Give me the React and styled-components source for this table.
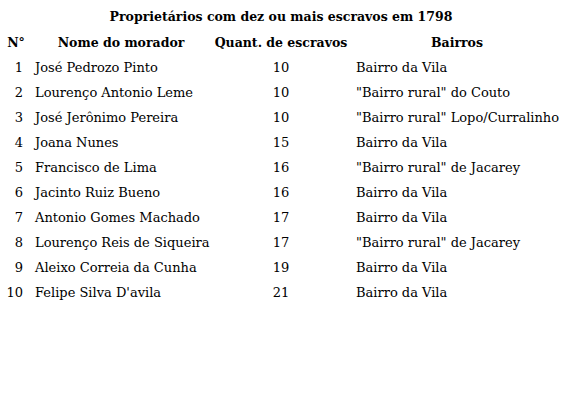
import styled, { createGlobalStyle } from "styled-components";

const GlobalStyle = createGlobalStyle`
  body {
    margin: 0;
    background: #fff;
    color: #000;
    font-family: "DejaVu Serif", "Liberation Serif", serif;
  }
`;

const Table = styled.table`
  width: 562px;
  border-collapse: collapse;
  table-layout: fixed;
  font-size: 13px;
`;

const Caption = styled.caption`
  font-weight: bold;
  font-size: 12.5px;
  line-height: 26px;
  padding-top: 4px;
  text-align: center;
`;

const Th = styled.th`
  font-weight: bold;
  font-size: 12.5px;
  height: 25px;
  padding: 0;
  text-align: center;
`;

const Td = styled.td`
  height: 25px;
  padding: 0 ${({ $right }) => $right || 0}px 0 ${({ $pad }) => $pad || 0}px;
  text-align: ${({ $align }) => $align || "left"};
  white-space: nowrap;
  font-weight: 300;
`;

const rows = [
  ["José Pedrozo Pinto", 10, "Bairro da Vila"],
  ["Lourenço Antonio Leme", 10, '"Bairro rural" do Couto'],
  ["José Jerônimo Pereira", 10, '"Bairro rural" Lopo/Curralinho'],
  ["Joana Nunes", 15, "Bairro da Vila"],
  ["Francisco de Lima", 16, '"Bairro rural" de Jacarey'],
  ["Jacinto Ruiz Bueno", 16, "Bairro da Vila"],
  ["Antonio Gomes Machado", 17, "Bairro da Vila"],
  ["Lourenço Reis de Siqueira", 17, '"Bairro rural" de Jacarey'],
  ["Aleixo Correia da Cunha", 19, "Bairro da Vila"],
  ["Felipe Silva D'avila", 21, "Bairro da Vila"],
];

export default function App() {
  return (
    <>
      <GlobalStyle />
      <Table>
        <Caption>Proprietários com dez ou mais escravos em 1798</Caption>
        <colgroup>
          <col style={{ width: 32 }} />
          <col style={{ width: 178 }} />
          <col style={{ width: 142 }} />
          <col style={{ width: 210 }} />
        </colgroup>
        <thead>
          <tr>
            <Th>N°</Th>
            <Th>Nome do morador</Th>
            <Th>Quant. de escravos</Th>
            <Th>Bairros</Th>
          </tr>
        </thead>
        <tbody>
          {rows.map(([name, qty, bairro], i) => (
            <tr key={i}>
              <Td $align="right" $right={9}>{i + 1}</Td>
              <Td $pad={3}>{name}</Td>
              <Td $align="center">{qty}</Td>
              <Td $pad={4}>{bairro}</Td>
            </tr>
          ))}
        </tbody>
      </Table>
    </>
  );
}
